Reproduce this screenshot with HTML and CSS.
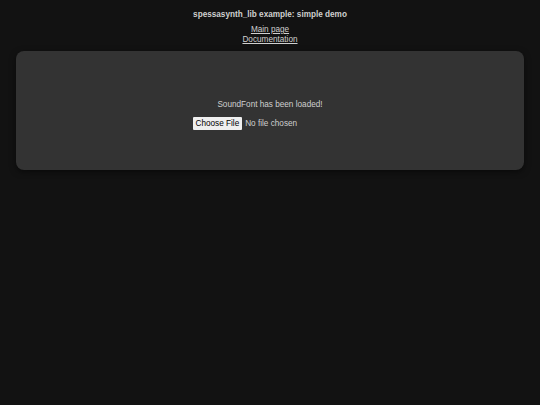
FILE: index.html
```html
<!DOCTYPE html>
<html>
<head>
<meta charset="utf-8">
<link rel="stylesheet" href="styles.css">
</head>
<body>
<h1 class="title">spessasynth_lib example: simple demo</h1>
<nav class="links">
  <a href="#">Main page</a>
  <a href="#">Documentation</a>
</nav>
<main class="card">
  <p class="status">SoundFont has been loaded!</p>
  <input type="file" class="file">
</main>
</body>
</html>
```
FILE: styles.css
```css
html, body {
  margin: 0;
  padding: 0;
  background: #121212;
  color: #cfcfcf;
  font-family: "Liberation Sans", Arial, sans-serif;
  font-size: 8.2px;
}
body {
  padding: 9px 16px;
}
.title {
  margin: 0;
  text-align: center;
  font-size: 8.2px;
  font-weight: bold;
  color: #d0d0d0;
  line-height: 12px;
}
.links {
  display: flex;
  flex-direction: column;
  align-items: center;
  margin-top: 4px;
  line-height: 10px;
}
.links a {
  color: #d0d0d0;
}
.card {
  margin-top: 6px;
  background: #333333;
  border-radius: 8px;
  box-shadow: 0 2px 6px rgba(0,0,0,0.5);
  height: 119px;
  box-sizing: border-box;
  padding-top: 8px;
  display: flex;
  flex-direction: column;
  align-items: center;
  justify-content: center;
}
.status {
  margin: 0 0 8px 0;
  color: #cfcfcf;
}
.file {
  font-family: "Liberation Sans", Arial, sans-serif;
  font-size: 8.2px;
  color: #cfcfcf;
}
.file::file-selector-button {
  font-family: "Liberation Sans", Arial, sans-serif;
  font-size: 8.2px;
  background: #efefef;
  color: #000;
  border: none;
  border-radius: 1px;
  padding: 2px 3px;
  margin-right: 3px;
}
```
